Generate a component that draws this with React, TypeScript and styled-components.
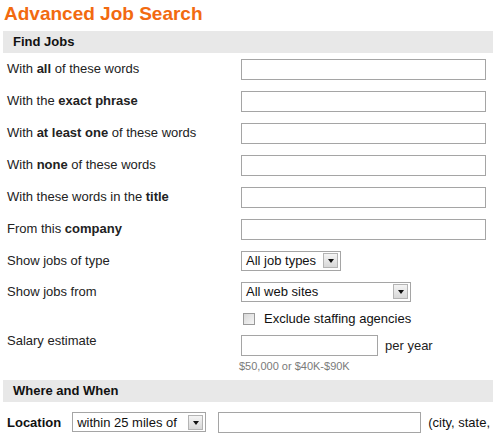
import React from "react";
import styled, { createGlobalStyle } from "styled-components";

const Global = createGlobalStyle`
  html, body { margin: 0; padding: 0; background: #fff; }
  body { font-family: "Liberation Sans", Arial, sans-serif; color: #222; }
`;

const Page = styled.div`
  width: 490px;
  padding: 0 1px 0 3px;
  overflow: hidden;
`;

const Title = styled.h1`
  margin: 0;
  padding-left: 1px;
  height: 31px;
  line-height: 28px;
  font-size: 19px;
  font-weight: bold;
  color: #f26a10;
`;

const SectionHeader = styled.div`
  height: 22px;
  line-height: 22px;
  padding-left: 10px;
  background: #e8e8e8;
  font-size: 13px;
  font-weight: bold;
  color: #111;
`;

const FieldRow = styled.div<{ $h: number; $top?: boolean }>`
  display: grid;
  grid-template-columns: 234px 1fr;
  align-items: ${(p) => (p.$top ? "start" : "center")};
  height: ${(p) => p.$h}px;
  padding-left: 4px;
`;

const Label = styled.div<{ $pt?: number }>`
  font-size: 13px;
  line-height: 16px;
  padding-top: ${(p) => p.$pt ?? 0}px;
  b { font-weight: bold; }
`;

const Control = styled.div`
  display: flex;
  align-items: center;
  gap: 7px;
  font-size: 13px;
`;

const TextInput = styled.div<{ $w: number }>`
  box-sizing: border-box;
  width: ${(p) => p.$w}px;
  height: 21px;
  border: 1px solid #a5a5a5;
  background: #fff;
  flex-shrink: 0;
`;

const SelectBox = styled.div<{ $w: number }>`
  box-sizing: border-box;
  width: ${(p) => p.$w}px;
  height: 20px;
  border: 1px solid #a5a5a5;
  background: #fff;
  display: flex;
  align-items: center;
  justify-content: space-between;
  padding: 0 2px 0 4px;
  font-size: 13px;
  color: #111;
  flex-shrink: 0;
`;

const ArrowButton = styled.div`
  box-sizing: border-box;
  width: 15px;
  height: 15px;
  border: 1px solid #b4b4b4;
  background: linear-gradient(#f4f4f4, #d8d8d8);
  display: flex;
  align-items: center;
  justify-content: center;
  &::after {
    content: "";
    border-left: 3px solid transparent;
    border-right: 3px solid transparent;
    border-top: 4px solid #111;
    margin-top: 1px;
  }
`;

const CheckRow = styled.div`
  display: flex;
  align-items: center;
  gap: 9px;
  padding-left: 2px;
  font-size: 13px;
  color: #111;
`;

const CheckBox = styled.div`
  box-sizing: border-box;
  width: 12px;
  height: 12px;
  border: 1px solid #9a9a9a;
  background: linear-gradient(135deg, #d8d8d8, #f6f6f6);
`;

const SalaryStack = styled.div`
  display: flex;
  flex-direction: column;
  padding-top: 5px;
`;

const Hint = styled.div`
  font-size: 11px;
  color: #7a7a7a;
  margin-left: -2px;
  margin-top: 4px;
`;

const LocationRow = styled.div`
  display: flex;
  align-items: center;
  height: 40px;
  padding: 0 0 0 4px;
  font-size: 13px;
  color: #111;
  white-space: nowrap;
`;

const LocationLabel = styled.span`
  font-weight: bold;
  margin-right: 11px;
`;

const Spacer = styled.div<{ $w: number }>`
  width: ${(p) => p.$w}px;
  flex-shrink: 0;
`;

const Select = ({ w, value }: { w: number; value: string }) => (
  <SelectBox $w={w}>
    <span>{value}</span>
    <ArrowButton />
  </SelectBox>
);

export default function App() {
  const wordRows: React.ReactNode[] = [
    <>With <b>all</b> of these words</>,
    <>With the <b>exact phrase</b></>,
    <>With <b>at least one</b> of these words</>,
    <>With <b>none</b> of these words</>,
    <>With these words in the <b>title</b></>,
    <>From this <b>company</b></>,
  ];
  return (
    <Page>
      <Global />
      <Title>Advanced Job Search</Title>
      <SectionHeader>Find Jobs</SectionHeader>
      {wordRows.map((l, i) => (
        <FieldRow key={i} $h={32}>
          <Label>{l}</Label>
          <Control>
            <TextInput $w={245} />
          </Control>
        </FieldRow>
      ))}
      <FieldRow $h={31}>
        <Label>Show jobs of type</Label>
        <Control>
          <Select w={100} value="All job types" />
        </Control>
      </FieldRow>
      <FieldRow $h={31}>
        <Label>Show jobs from</Label>
        <Control>
          <Select w={170} value="All web sites" />
        </Control>
      </FieldRow>
      <FieldRow $h={23}>
        <span />
        <CheckRow>
          <CheckBox />
          Exclude staffing agencies
        </CheckRow>
      </FieldRow>
      <FieldRow $h={50} $top>
        <Label $pt={3}>Salary estimate</Label>
        <SalaryStack>
          <Control>
            <TextInput $w={137} />
            per year
          </Control>
          <Hint>$50,000 or $40K-$90K</Hint>
        </SalaryStack>
      </FieldRow>
      <SectionHeader>Where and When</SectionHeader>
      <LocationRow>
        <LocationLabel>Location</LocationLabel>
        <Select w={134} value="within 25 miles of" />
        <Spacer $w={12} />
        <TextInput $w={203} />
        <Spacer $w={7} />
        (city, state,
      </LocationRow>
    </Page>
  );
}
